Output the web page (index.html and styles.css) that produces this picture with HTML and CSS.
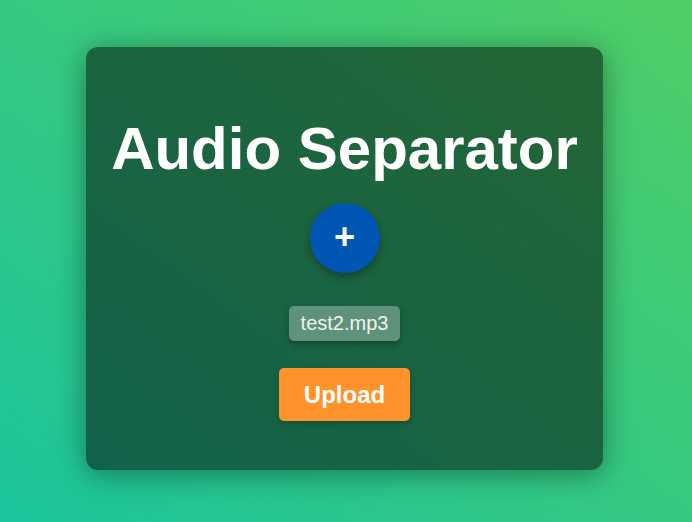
FILE: index.html
```html
<!DOCTYPE html>
<html>
<head>
<meta charset="utf-8">
<link rel="stylesheet" href="styles.css">
</head>
<body>
<div class="card">
  <h1 class="title">Audio Separator</h1>
  <button class="add">+</button>
  <div class="file">test2.mp3</div>
  <button class="upload">Upload</button>
</div>
</body>
</html>
```
FILE: styles.css
```css
html, body {
  margin: 0;
  height: 100%;
}
body {
  font-family: "Liberation Sans", Arial, sans-serif;
  background: linear-gradient(to top right, #1cc49c, #4fce66);
  display: flex;
  justify-content: center;
  align-items: flex-start;
  padding-top: 47px;
  padding-right: 3px;
  box-sizing: border-box;
}
.card {
  width: 517px;
  height: 423px;
  box-sizing: border-box;
  background: rgba(0, 0, 0, 0.5);
  border-radius: 12px;
  box-shadow: 0 4px 30px rgba(0, 0, 0, 0.4);
  display: flex;
  flex-direction: column;
  align-items: center;
  padding-top: 67px;
}
.title {
  margin: 0;
  color: #fff;
  font-size: 60px;
  font-weight: bold;
  line-height: 70px;
}
.add {
  margin-top: 19px;
  width: 70px;
  height: 70px;
  border-radius: 50%;
  border: none;
  background: #0056b3;
  color: #fff;
  font-family: "Liberation Sans", Arial, sans-serif;
  font-size: 36px;
  font-weight: bold;
  line-height: 1;
  padding: 0 0 2px;
  box-shadow: 0 4px 8px rgba(0, 0, 0, 0.3);
}
.file {
  margin-top: 33px;
  padding: 0 12px;
  height: 35px;
  line-height: 35px;
  border-radius: 5px;
  background: rgba(255, 255, 255, 0.3);
  color: #f2f2f2;
  font-size: 20px;
  box-shadow: 0 3px 6px rgba(0, 0, 0, 0.3);
}
.upload {
  margin-top: 27px;
  width: 131px;
  height: 53px;
  border: none;
  border-radius: 5px;
  background: #ff922b;
  color: #fff;
  font-family: "Liberation Sans", Arial, sans-serif;
  font-size: 24px;
  font-weight: bold;
  box-shadow: 0 3px 6px rgba(0, 0, 0, 0.2);
}
```
